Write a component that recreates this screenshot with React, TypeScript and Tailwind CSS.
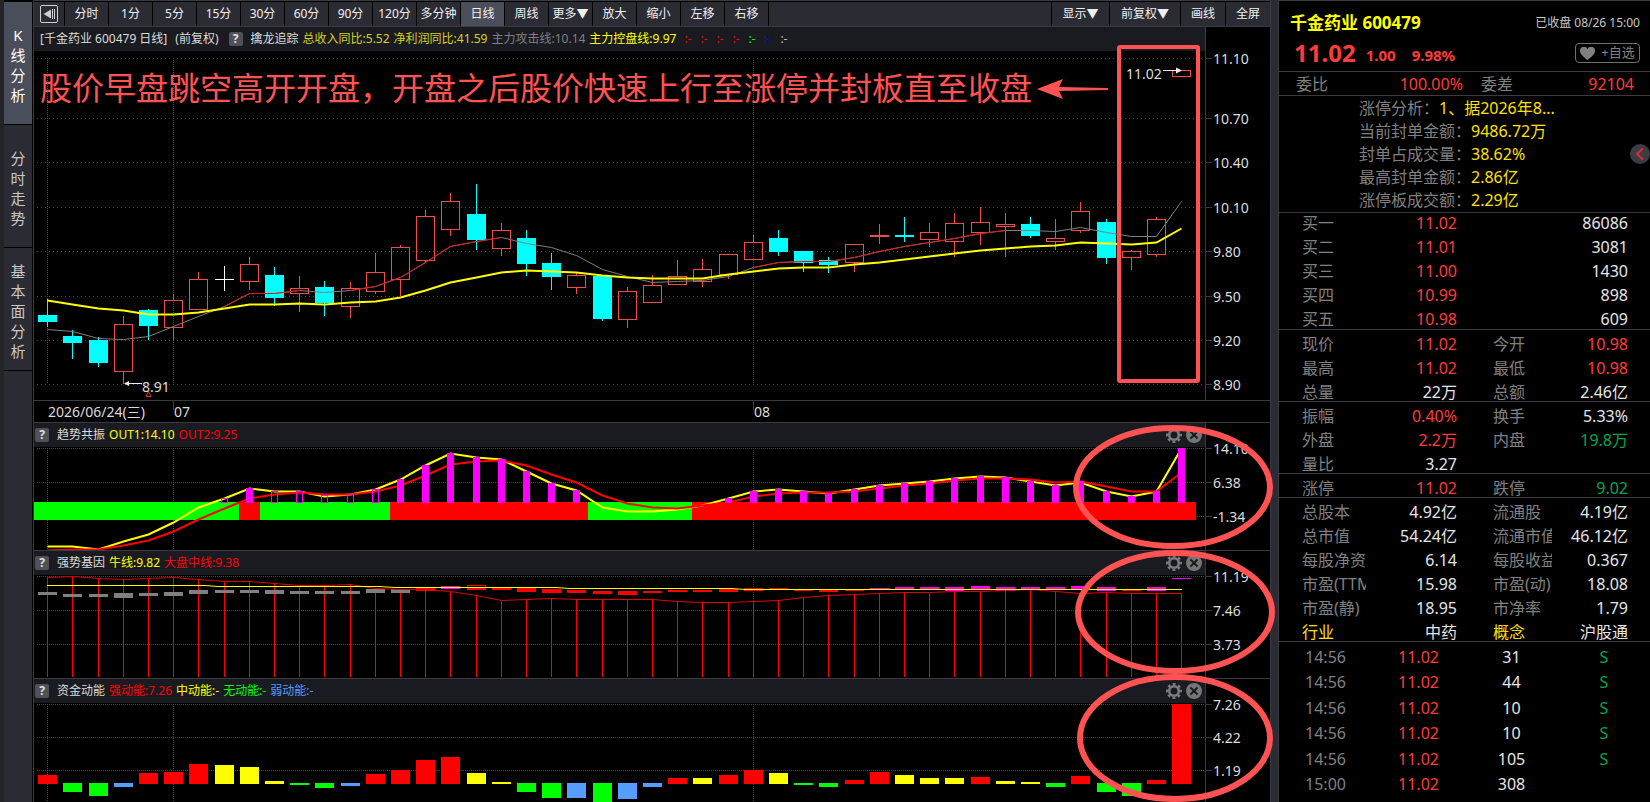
import React from "react";
import clsx from "clsx";

const PERIODS = [
   "分时", "1分", "5分", "15分", "30分", "60分", "90分", "120分",
   "多分钟", "日线", "周线", "更多▼", "放大", "缩小", "左移", "右移",
];

// [kind, high, bodyTop, bodyBottom, low] in chart coordinates
type Candle = [string, number, number, number, number];

const CANDLES: Candle[] = [
   ["down", 299, 315, 322, 327],
   ["down", 330, 336, 343, 359],
   ["down", 337, 340, 363, 367],
   ["up", 316, 324, 371, 384],
   ["down", 309, 310, 326, 340],
   ["up", 294, 300, 327, 340],
   ["up", 272, 279, 309, 309],
   ["flat", 266, 279, 279, 291],
   ["up", 257, 264, 281, 290],
   ["down", 267, 275, 298, 306],
   ["up", 276, 288, 293, 312],
   ["down", 281, 287, 303, 316],
   ["up", 282, 288, 306, 318],
   ["up", 253, 272, 291, 294],
   ["up", 245, 247, 279, 296],
   ["up", 210, 216, 260, 262],
   ["up", 193, 201, 229, 236],
   ["down", 184, 214, 240, 250],
   ["up", 223, 230, 248, 256],
   ["down", 230, 238, 264, 276],
   ["down", 253, 263, 277, 290],
   ["up", 272, 275, 287, 294],
   ["down", 275, 276, 319, 321],
   ["up", 287, 291, 319, 328],
   ["up", 275, 285, 302, 302],
   ["up", 260, 276, 284, 284],
   ["up", 259, 269, 281, 287],
   ["up", 254, 254, 274, 279],
   ["up", 235, 242, 259, 259],
   ["down", 230, 238, 252, 256],
   ["down", 251, 251, 263, 272],
   ["down", 257, 260, 265, 273],
   ["up", 244, 244, 262, 272],
   ["up", 224, 235, 236, 244],
   ["down", 217, 235, 237, 242],
   ["up", 223, 232, 239, 247],
   ["up", 213, 223, 241, 257],
   ["up", 207, 222, 232, 245],
   ["up", 213, 224, 226, 257],
   ["down", 217, 224, 236, 238],
   ["up", 219, 238, 241, 250],
   ["up", 202, 211, 230, 233],
   ["down", 219, 222, 258, 264],
   ["up", 250, 251, 257, 270],
   ["up", 217, 219, 254, 257],
   ["up", 70, 70, 76, 76],
];

const CONTROL_LINE = [
   300, 304, 308, 310, 314, 314, 312, 308, 304, 304, 303, 304, 302, 301, 297, 290,
   282, 277, 272, 270, 271, 272, 275, 277, 278, 278, 278, 274, 271, 268, 267, 267,
   264, 262, 259, 256, 253, 250, 248, 246, 245, 242, 243, 244, 242, 228,
];

const ATTACK_LINE = [
   329, 331, 338, 339, 336, 326, 316, 306, 293, 293, 290, 292, 290, 286, 277, 262,
   246, 241, 237, 243, 247, 255, 269, 276, 282, 281, 280, 276, 267, 262, 261, 261,
   257, 251, 246, 242, 238, 233, 230, 230, 231, 227, 232, 236, 236, 201,
];

const OUT1 = [
   546, 546, 549, 541, 534, 522, 507, 498, 488, 491, 491, 496, 494, 489, 479, 465,
   453, 457, 459, 471, 483, 490, 507, 511, 511, 509, 505, 498, 491, 489, 491, 493,
   489, 485, 483, 481, 478, 476, 477, 481, 485, 482, 491, 496, 491, 448,
];

const OUT2 = [
   550, 549, 549, 545, 540, 531, 519, 508, 498, 494, 492, 494, 494, 491, 485, 475,
   464, 461, 460, 465, 474, 482, 495, 503, 507, 508, 505, 502, 496, 493, 492, 492,
   491, 488, 485, 483, 480, 478, 478, 479, 482, 481, 486, 491, 491, 472,
];

// [index, top, hollow]
const TREND_BARS: [number, number, boolean][] = [
   [7, 498, true], [8, 488, false], [9, 491, true], [10, 491, true], [11, 495, true],
   [12, 494, true], [13, 489, true], [14, 479, false], [15, 465, false], [16, 453, false],
   [17, 457, false], [18, 459, false], [19, 471, false], [20, 483, false], [21, 490, false],
   [27, 498, false], [28, 491, false], [29, 489, false], [30, 491, false], [31, 493, false],
   [32, 489, false], [33, 485, false], [34, 483, false], [35, 481, false], [36, 478, false],
   [37, 476, false], [38, 477, false], [39, 481, false], [40, 485, false], [41, 481, false],
   [42, 491, false], [43, 496, false], [44, 491, false], [45, 448, false],
];

const BANDS: [number, number, string][] = [
   [34, 239, "#00ff00"],
   [239, 260, "#ff0000"],
   [260, 390, "#00ff00"],
   [390, 588, "#ff0000"],
   [588, 692, "#00ff00"],
   [692, 1196, "#ff0000"],
];

const MARKET_LINE = [
   577, 576, 578, 579, 578, 577, 579, 581, 581, 583, 585, 585, 584, 588, 589, 589,
   591, 595, 600, 599, 598, 599, 599, 599, 599, 601, 602, 602, 601, 600, 597, 595,
   594, 593, 592, 592, 591, 591, 590, 589, 591, 593, 592, 593, 593, 593,
];

const GRAY = "#808080";
const RED = "#ff0000";
const PINK = "#ff00ff";
const YELLOW = "#ffff00";
const GREEN = "#00ff00";
const BLUE = "#559dff";

// [top, bottom, colour]
const GENE_BARS: [number, number, string][] = [
   [592, 595, GRAY], [594, 597, GRAY], [594, 597, GRAY], [593, 598, GRAY], [593, 596, GRAY],
   [592, 596, GRAY], [590, 594, GRAY], [590, 593, GRAY], [590, 593, GRAY], [590, 594, GRAY],
   [591, 594, GRAY], [591, 594, GRAY], [591, 594, GRAY], [589, 593, GRAY], [589, 593, GRAY],
   [587, 591, RED], [586, 589, PINK], [587, 590, RED], [587, 590, RED], [588, 592, RED],
   [589, 593, RED], [590, 593, RED], [591, 594, RED], [591, 595, RED], [591, 593, RED],
   [590, 592, RED], [590, 592, RED], [589, 592, RED], [588, 591, RED], [588, 590, RED],
   [589, 591, RED], [590, 592, RED], [589, 591, RED], [588, 590, PINK], [587, 590, PINK],
   [587, 590, PINK], [587, 591, PINK], [586, 590, PINK], [587, 591, PINK], [587, 590, PINK],
   [587, 590, PINK], [586, 590, PINK], [587, 591, PINK], [589, 591, RED], [587, 591, PINK],
   [578, 579, PINK],
];

// end of each bar and its colour, measured from the zero line
const ENERGY_BARS: [number, string][] = [
   [775, RED], [792, GREEN], [796, GREEN], [787, BLUE], [773, RED], [772, RED], [764, RED],
   [765, YELLOW], [767, YELLOW], [781, YELLOW], [785, GREEN], [788, GREEN], [786, BLUE],
   [774, RED], [770, RED], [760, RED], [757, RED], [773, YELLOW], [782, YELLOW],
   [792, GREEN], [798, GREEN], [798, BLUE], [802, GREEN], [799, BLUE], [787, BLUE],
   [778, RED], [778, YELLOW], [775, RED], [770, RED], [773, YELLOW], [785, GREEN],
   [787, GREEN], [780, RED], [772, RED], [775, YELLOW], [778, YELLOW], [778, YELLOW],
   [777, RED], [781, YELLOW], [782, YELLOW], [787, GREEN], [776, RED], [792, GREEN],
   [796, GREEN], [780, RED], [704, RED],
];

const xAt = (i: number) => Math.round(47.2 + 25.2 * i);

const toPoints = (ys: number[], from = 0, to = ys.length - 1) =>
   ys
      .slice(from, to + 1)
      .map((y, i) => `${xAt(from + i) + 0.5},${y + 0.5}`)
      .join(" ");

type GridProps = { rows: number[]; top: number; bottom: number; dash: string };

const Grid = ({ rows, top, bottom, dash }: GridProps) => (
   <g stroke="#46464a" strokeWidth="1">
      {rows.map((y) => (
         <line key={y} x1="37" x2="1205" y1={y + 0.5} y2={y + 0.5} strokeDasharray={dash} />
      ))}
      {[47, 173, 753].map((x) => (
         <line key={x} x1={x + 0.5} x2={x + 0.5} y1={top} y2={bottom} strokeDasharray="1 1" />
      ))}
   </g>
);

type PlotProps = {
   top: number;
   height: number;
   width?: number;
   className: string;
   children: React.ReactNode;
};

const Plot = ({ top, height, width = 1171, className, children }: PlotProps) => (
   <svg
      viewBox={`34 ${top} ${width} ${height}`}
      preserveAspectRatio="none"
      className={clsx("block w-full", className)}
   >
      {children}
   </svg>
);

type AxisProps = { top: number; height: number; className: string; ticks: [number, string][] };

const Axis = ({ top, height, className, ticks }: AxisProps) => (
   <svg
      viewBox={`1205 ${top} 65 ${height}`}
      className={clsx("block w-[65px] shrink-0 bg-black", className)}
   >
      <line x1="1205.5" x2="1205.5" y1={top} y2={top + height} stroke="#3a3a42" />
      {ticks.map(([y, label]) => (
         <g key={label}>
            <line x1="1206" x2="1212" y1={y + 0.5} y2={y + 0.5} stroke="#3a3a42" />
            <text x="1213" y={y + 6} fontSize="14" fill="#dcdcdc">
               {label}
            </text>
         </g>
      ))}
   </svg>
);

const Help = () => (
   <button
      aria-label="说明"
      className="h-3.5 w-3.5 shrink-0 rounded-xs bg-[#505158] text-center text-[12px] leading-3.5 font-bold text-[#e0e0e0]"
   >
      ?
   </button>
);

const GearIcon = () => (
   <svg viewBox="0 0 16 16" className="h-4 w-4">
      <circle cx="8" cy="8" r="4.8" fill="none" stroke="#7c7c7c" strokeWidth="2.6" />
      <circle
         cx="8" cy="8" r="6.8" fill="none" stroke="#7c7c7c" strokeWidth="2.4"
         strokeDasharray="2.8 2.54" strokeDashoffset="1.4"
      />
   </svg>
);

const CloseIcon = () => (
   <svg viewBox="0 0 16 16" className="h-4 w-4">
      <circle cx="8" cy="8" r="8" fill="#757575" />
      <path d="M4.5 4.5l7 7M11.5 4.5l-7 7" stroke="#16171b" strokeWidth="1.8" />
   </svg>
);

type PanelProps = {
   title: string;
   values: [string, string][];
   top: number;
   plotHeight: number;
   axisClass: string;
   plotClass: string;
   ticks: [number, string][];
   children: React.ReactNode;
};

const Panel = ({ title, values, top, plotHeight, axisClass, plotClass, ticks, children }: PanelProps) => (
   <section className="flex border-t border-[#3a3a42]">
      <div className="min-w-0 flex-1">
         <header className="flex h-6 items-center bg-[#1a1b20] pr-[3px] pl-px text-[12px] whitespace-nowrap">
            <Help />
            <h2 className="ml-2 text-[#dcdcdc]">{title}</h2>
            <div className="ml-1 flex flex-1 gap-1">
               {values.map(([text, color]) => (
                  <span key={text} className={color}>
                     {text}
                  </span>
               ))}
            </div>
            <button aria-label="设置" className="mr-1">
               <GearIcon />
            </button>
            <button aria-label="关闭">
               <CloseIcon />
            </button>
         </header>
         <Plot top={top + 25} height={plotHeight} className={plotClass}>
            {children}
         </Plot>
      </div>
      <Axis top={top + 1} height={plotHeight + 24} className={axisClass} ticks={ticks} />
   </section>
);

const SideTab = ({ label, active }: { label: string; active?: boolean }) => (
   <button
      className={clsx(
         "flex h-[123px] w-full items-center justify-center border-b border-black pt-1 text-[15px] leading-5",
         active ? "bg-[#4a4e5a] text-white" : "bg-[#2b2b34] text-[#c8c8c8]"
      )}
   >
      <span className="w-[15px] break-all">{label}</span>
   </button>
);

const Toolbar = () => (
   <div className="flex h-6 bg-[#2b2b34] text-[12px] whitespace-nowrap text-[#f0f0f0]">
      <button
         aria-label="收起"
         className="flex w-[31px] shrink-0 items-center justify-center border-r border-black"
      >
         <svg viewBox="0 0 18 18" className="h-[18px] w-[18px]">
            <rect x="0.5" y="0.5" width="17" height="17" rx="1.5" fill="none" stroke="#d0d0d0" />
            <path d="M3.5 9L11 4.5v9z" fill="#d0d0d0" />
            <path d="M12.5 4v10M14.5 4v10" stroke="#d0d0d0" strokeWidth="1" />
         </svg>
      </button>
      {PERIODS.map((p) => (
         <button
            key={p}
            className={clsx(
               "w-11 shrink-0 border-r border-black text-center",
               p === "日线" && "bg-[#4a4e5a]"
            )}
         >
            {p}
         </button>
      ))}
      <div className="flex-1" />
      <button className="w-[58px] border-l border-black">显示▼</button>
      <button className="w-[71px] border-l border-black">前复权▼</button>
      <button className="w-[45px] border-l border-black">画线</button>
      <button className="w-[45px] border-l border-black">全屏</button>
   </div>
);

const InfoBar = () => (
   <div className="flex h-6 items-center bg-[#1a1b20] pl-1.5 text-[12px] whitespace-nowrap text-[#dcdcdc]">
      <h1>[千金药业 600479 日线]</h1>
      <span className="ml-2">(前复权)</span>
      <span className="ml-2.5 flex">
         <Help />
      </span>
      <span className="ml-2">擒龙追踪</span>
      <span className="ml-1 text-[#d8d020]">总收入同比:5.52</span>
      <span className="ml-1 text-[#d8d020]">净利润同比:41.59</span>
      <span className="ml-1 text-[#808080]">主力攻击线:10.14</span>
      <span className="ml-1 text-[#ffff00]">主力控盘线:9.97</span>
      <div className="ml-2 flex">
         <span className="w-4 text-[#ff0000]">:-</span>
         <span className="w-4 text-[#ff0000]">:-</span>
         <span className="w-4 text-[#ff0000]">:-</span>
         <span className="w-4 text-[#ff0000]">:-</span>
         <span className="w-4 text-[#00ff00]">:-</span>
         <span className="w-4 text-[#0000ff]">:-</span>
         <span className="w-4 text-[#c0c0c0]">:-</span>
      </div>
   </div>
);

const CandleShape = ({ candle, x }: { candle: Candle; x: number }) => {
   const [kind, high, top, bottom, low] = candle;
   if (kind === "flat") {
      return (
         <path d={`M${x + 0.5} ${high}V${low}M${x - 9} ${top + 0.5}H${x + 10}`} stroke="#ffffff" />
      );
   }
   if (kind === "down") {
      return (
         <g fill="#00ffff">
            <rect x={x} y={high} width="1" height={low - high} />
            <rect x={x - 9} y={top} width="19" height={bottom - top} />
         </g>
      );
   }
   return (
      <g stroke="#f04a4a" fill="none">
         <path d={`M${x + 0.5} ${high}V${top}M${x + 0.5} ${bottom + 1}V${Math.max(low, bottom + 1)}`} />
         <rect x={x - 8.5} y={top + 0.5} width="18" height={bottom - top} />
      </g>
   );
};

const MainChart = () => (
   <Plot top={51} height={349} className="h-[349px]">
      <Grid rows={[58, 118, 162, 207, 251, 296, 340, 384]} top={58} bottom={384} dash="1 3" />
      {CANDLES.map((candle, i) => (
         <CandleShape key={i} candle={candle} x={xAt(i)} />
      ))}
      <g fill="none" strokeWidth="1">
         <polyline points={toPoints(ATTACK_LINE)} stroke="#808080" />
         <polyline points={toPoints(ATTACK_LINE, 7, 10)} stroke="#e01818" />
         <polyline points={toPoints(ATTACK_LINE, 12, 18)} stroke="#e01818" />
         <polyline points={toPoints(ATTACK_LINE, 28, 38)} stroke="#e01818" />
      </g>
      <polyline points={toPoints(CONTROL_LINE)} fill="none" stroke="#ffff00" strokeWidth="2" />
      <g stroke="#ececec" fill="#ececec">
         <path d="M126 383.5H142" />
         <path d="M124 383.5l5-2.5v5z" stroke="none" />
         <path d="M1163 70.5H1178" />
         <path d="M1182 70.5l-6-3v6z" stroke="none" />
      </g>
      <path d="M148.5 391.5l2.5 5h-5z" fill="none" stroke="#e03030" />
      <text x="142" y="392" fontSize="14" fill="#dcdcdc">8.91</text>
      <text x="1126" y="79" fontSize="14" fill="#dcdcdc">11.02</text>
   </Plot>
);

const TrendPlot = () => (
   <>
      <Grid rows={[448, 482, 516]} top={448} bottom={550} dash="1 1" />
      {BANDS.map(([from, to, color]) => (
         <rect key={from} x={from} y="502" width={to - from} height="18" fill={color} />
      ))}
      <polyline points={toPoints(OUT1)} fill="none" stroke="#ffff00" strokeWidth="2" />
      <polyline points={toPoints(OUT2)} fill="none" stroke="#ff0000" strokeWidth="2" />
      {TREND_BARS.map(([i, top, hollow]) =>
         hollow ? (
            <rect
               key={i} x={xAt(i) - 2.5} y={top + 0.5} width="6" height={502 - top}
               fill="none" stroke={PINK}
            />
         ) : (
            <rect key={i} x={xAt(i) - 3} y={top} width="7" height={503 - top} fill={PINK} />
         )
      )}
   </>
);

const GenePlot = () => (
   <>
      <Grid rows={[576, 610, 644]} top={576} bottom={677} dash="1 1" />
      {MARKET_LINE.map((y, i) => (
         <rect key={i} x={xAt(i)} y={y} width="1" height={677 - y} fill={RED} />
      ))}
      {GENE_BARS.map(([top, bottom, color], i) => (
         <rect key={i} x={xAt(i) - 9} y={top} width="19" height={bottom - top} fill={color} />
      ))}
      <rect x={xAt(17) - 8.5} y="585.5" width="18" height="4" fill="none" stroke={RED} />
      <polyline points={toPoints(MARKET_LINE)} fill="none" stroke="#e00000" />
      <path
         d="M47 585.5H205L218 586.5H380L394 587.5H556L570 588.5H732L745 589.5H1182"
         fill="none" stroke="#ffff00"
      />
   </>
);

const EnergyPlot = () => (
   <>
      <Grid rows={[704, 737, 770]} top={704} bottom={802} dash="1 1" />
      {ENERGY_BARS.map(([end, color], i) => {
         const above = end < 784;
         return (
            <rect
               key={i} x={xAt(i) - 9} y={above ? end : 783} width="19"
               height={above ? 784 - end : end - 783} fill={color}
            />
         );
      })}
   </>
);

const Annotations = () => (
   <div className="pointer-events-none absolute inset-0">
      <p className="absolute top-[64px] left-1.5 text-[32px] leading-[48px] whitespace-nowrap text-[#ff5252]">
         股价早盘跳空高开开盘，开盘之后股价快速上行至涨停并封板直至收盘
      </p>
      <svg viewBox="34 0 1244 802" preserveAspectRatio="none" className="absolute inset-0 h-full w-full">
         <path d="M1037 89l26-10l-4 8l49 1v2l-49 1l4 8z" fill="#ff5252" />
         <g fill="none" stroke="#ff5252">
            <rect x="1119" y="47" width="79" height="334" rx="1" strokeWidth="4" />
            <ellipse cx="1173" cy="487" rx="97" ry="59" strokeWidth="6" />
            <ellipse cx="1175" cy="612" rx="97" ry="59" strokeWidth="6" />
            <ellipse cx="1175" cy="738" rx="95" ry="61" strokeWidth="6" />
         </g>
      </svg>
   </div>
);

const R = "text-[#ff3b3b]";
const W = "text-[#e6e6e6]";
const G = "text-[#00a651]";
const L = "text-[#808080]";
const Y = "text-[#ffe100]";

type Field = [label: string, value: string, color: string, labelColor?: string];

const QUOTES: Field[][][] = [
   [
      [["现价", "11.02", R], ["今开", "10.98", R]],
      [["最高", "11.02", R], ["最低", "10.98", R]],
      [["总量", "22万", W], ["总额", "2.46亿", W]],
   ],
   [
      [["振幅", "0.40%", R], ["换手", "5.33%", W]],
      [["外盘", "2.2万", R], ["内盘", "19.8万", G]],
      [["量比", "3.27", W]],
   ],
   [[["涨停", "11.02", R], ["跌停", "9.02", G]]],
   [
      [["总股本", "4.92亿", W], ["流通股", "4.19亿", W]],
      [["总市值", "54.24亿", W], ["流通市值", "46.12亿", W]],
      [["每股净资产", "6.14", W], ["每股收益", "0.367", W]],
      [["市盈(TTM)", "15.98", W], ["市盈(动)", "18.08", W]],
      [["市盈(静)", "18.95", W], ["市净率", "1.79", W]],
      [["行业", "中药", W, Y], ["概念", "沪股通", W, Y]],
   ],
];

const ANALYSIS = [
   ["涨停分析：", "1、据2026年8..."],
   ["当前封单金额：", "9486.72万"],
   ["封单占成交量：", "38.62%"],
   ["最高封单金额：", "2.86亿"],
   ["涨停板成交额：", "2.29亿"],
];

const BIDS = [
   ["买一", "11.02", "86086"],
   ["买二", "11.01", "3081"],
   ["买三", "11.00", "1430"],
   ["买四", "10.99", "898"],
   ["买五", "10.98", "609"],
];

const DEALS = [
   ["14:56", "11.02", "31", "S"],
   ["14:56", "11.02", "44", "S"],
   ["14:56", "11.02", "10", "S"],
   ["14:56", "11.02", "10", "S"],
   ["14:56", "11.02", "105", "S"],
   ["15:00", "11.02", "308", ""],
];

const QuotePanel = () => (
   <aside className="relative flex w-[372px] shrink-0 flex-col border-t border-l border-[#3a3a42] bg-black text-[16px] whitespace-nowrap">
      <header className="h-[70px] pt-2 pr-2.5 pl-[11px]">
         <div className="flex items-center justify-between">
            <h2 className="text-[17px] leading-7 font-bold text-[#ffff00]">千金药业 600479</h2>
            <span className="text-[12px] text-[#c8c8c8]">已收盘 08/26 15:00</span>
         </div>
         <div className="flex items-center pl-1 font-bold">
            <span className="text-[24px] leading-8 text-[#ff3b3b]">11.02</span>
            <span className="pt-1 pl-2.5 text-[15px] text-[#ff3b3b]">1.00</span>
            <span className="flex-1 pt-1 pl-4 text-[15px] text-[#ff3b3b]">9.98%</span>
            <button className="flex h-5 w-[65px] items-center justify-center gap-1.5 rounded-sm border border-[#707070] text-[13px] font-normal text-[#808080]">
               <svg viewBox="0 0 15 13" className="h-[13px] w-[15px]">
                  <path
                     d="M7.5 13C3 9.5 0 7 0 4a3.9 3.9 0 0 1 7.5-1.8A3.9 3.9 0 0 1 15 4c0 3-3 5.500-7.500 9z"
                     fill="#808080"
                  />
               </svg>
               +自选
            </button>
         </div>
      </header>
      <dl className="flex h-6 items-center border-t border-[#3a3a42] pr-4 pl-[17px]">
         <dt className={L}>委比</dt>
         <dd className="flex-1 text-right text-[#ff3b3b]">100.00%</dd>
         <dt className="ml-[18px] text-[#808080]">委差</dt>
         <dd className="w-[121px] text-right text-[#ff3b3b]">92104</dd>
      </dl>
      <dl className="h-[117px] border-t border-[#3a3a42] pt-px pl-20">
         {ANALYSIS.map(([label, value]) => (
            <div key={label} className="flex leading-[23px]">
               <dt className={L}>{label}</dt>
               <dd className={Y}>{value}</dd>
            </div>
         ))}
      </dl>
      <div className="flex h-[117px] flex-col justify-end border-t border-[#3a3a42] pr-[22px] pl-[23px]">
         <table className="w-full table-fixed leading-[19px]">
            <tbody>
               {BIDS.map(([label, price, volume]) => (
                  <tr key={label} className="h-6">
                     <th className="w-16 pt-[5px] text-left font-normal text-[#808080]">{label}</th>
                     <td className="w-[91px] pt-[5px] text-right text-[#ff3b3b]">{price}</td>
                     <td className="pt-[5px] text-right text-[#e6e6e6]">{volume}</td>
                  </tr>
               ))}
            </tbody>
         </table>
      </div>
      {QUOTES.map((rows, i) => (
         <dl key={i} className="border-t border-[#3a3a42] pr-[22px] pl-[23px]">
            {rows.map((fields, j) => (
               <div
                  key={fields[0][0]}
                  className={clsx(
                     "flex items-start leading-6",
                     j === 0 ? "h-[23px] pt-0.5" : "h-6 pt-[3px]"
                  )}
               >
                  {fields.map(([label, value, color, labelColor], k) => (
                     <React.Fragment key={label}>
                        <dt
                           className={clsx(
                              "shrink-0 overflow-hidden",
                              k === 0 ? "w-16" : "ml-9 w-[59px]",
                              labelColor ?? L
                           )}
                        >
                           {label}
                        </dt>
                        <dd className={clsx("text-right", k === 0 ? "w-[91px]" : "flex-1", color)}>
                           {value}
                        </dd>
                     </React.Fragment>
                  ))}
               </div>
            ))}
         </dl>
      ))}
      <div className="border-t border-[#3a3a42] pt-0.5">
         <table className="h-[153px] w-full table-fixed text-center leading-5">
            <tbody>
               {DEALS.map(([time, price, volume, side], i) => (
                  <tr key={i}>
                     <td className="w-[93px] text-[#808080]">{time}</td>
                     <td className="w-[93px] text-[#ff3b3b]">{price}</td>
                     <td className="w-[93px] text-[#e6e6e6]">{volume}</td>
                     <td className="text-[#00a651]">{side}</td>
                  </tr>
               ))}
            </tbody>
         </table>
      </div>
      <button
         aria-label="展开"
         className="absolute top-[143px] right-0 flex h-5 w-5 items-center justify-center rounded-full bg-[#3c3c44]"
      >
         <svg viewBox="0 0 20 20" className="h-5 w-5">
            <path d="M13 4.500l-6 5.500l6 5.500" fill="none" stroke="#d83030" strokeWidth="2" />
         </svg>
      </button>
   </aside>
);

const App: React.FC = () => (
   <div className="flex min-h-screen bg-[#2b2b34] font-['Noto_Sans','Noto_Sans_CJK_SC',sans-serif]">
      <nav className="w-[34px] shrink-0 border-r border-[#3a3a42] bg-black">
         <div className="h-full border-l-4 border-[#232328] pt-0.5 pr-px">
            <div className="h-full bg-[#2b2b34]">
               <SideTab label="K线分析" active />
               <SideTab label="分时走势" />
               <SideTab label="基本面分析" />
            </div>
         </div>
      </nav>
      <main className="relative flex min-w-0 flex-1 flex-col pr-[7px]">
         <div className="border-r border-[#3a3a42] bg-black">
            <div className="border-t border-b border-[#3a3a42] bg-black pt-px">
               <Toolbar />
            </div>
            <div className="flex">
               <div className="min-w-0 flex-1">
                  <InfoBar />
                  <MainChart />
               </div>
               <Axis
                  top={27}
                  height={373}
                  className="h-[373px]"
                  ticks={[
                     [58, "11.10"],
                     [118, "10.70"],
                     [162, "10.40"],
                     [207, "10.10"],
                     [251, "9.80"],
                     [296, "9.50"],
                     [340, "9.20"],
                     [384, "8.90"],
                  ]}
               />
            </div>
            <Plot top={400} height={22} width={1236} className="h-[22px]">
               <path d="M34 400.500H1270M173.500 400V410M753.500 400V410" stroke="#3a3a42" />
               <text x="48" y="417" fontSize="14" fill="#dcdcdc">2026/06/24(三)</text>
               <text x="174" y="417" fontSize="14" fill="#dcdcdc">07</text>
               <text x="754" y="417" fontSize="14" fill="#dcdcdc">08</text>
            </Plot>
            <Panel
               title="趋势共振"
               values={[
                  ["OUT1:14.10", "text-[#ffff00]"],
                  ["OUT2:9.25", "text-[#ff0000]"],
               ]}
               top={422}
               plotHeight={103}
               plotClass="h-[103px]"
               axisClass="h-[127px]"
               ticks={[
                  [448, "14.10"],
                  [482, "6.38"],
                  [516, "-1.34"],
               ]}
            >
               <TrendPlot />
            </Panel>
            <Panel
               title="强势基因"
               values={[
                  ["牛线:9.82", "text-[#ffff00]"],
                  ["大盘中线:9.38", "text-[#ff0000]"],
               ]}
               top={550}
               plotHeight={103}
               plotClass="h-[103px]"
               axisClass="h-[127px]"
               ticks={[
                  [576, "11.19"],
                  [610, "7.46"],
                  [644, "3.73"],
               ]}
            >
               <GenePlot />
            </Panel>
            <Panel
               title="资金动能"
               values={[
                  ["强动能:7.26", "text-[#ff0000]"],
                  ["中动能:-", "text-[#ffff00]"],
                  ["无动能:-", "text-[#00ff00]"],
                  ["弱动能:-", "text-[#559dff]"],
               ]}
               top={678}
               plotHeight={99}
               plotClass="h-[99px]"
               axisClass="h-[123px]"
               ticks={[
                  [704, "7.26"],
                  [737, "4.22"],
                  [770, "1.19"],
               ]}
            >
               <EnergyPlot />
            </Panel>
         </div>
         <Annotations />
      </main>
      <QuotePanel />
   </div>
);

export default App;
